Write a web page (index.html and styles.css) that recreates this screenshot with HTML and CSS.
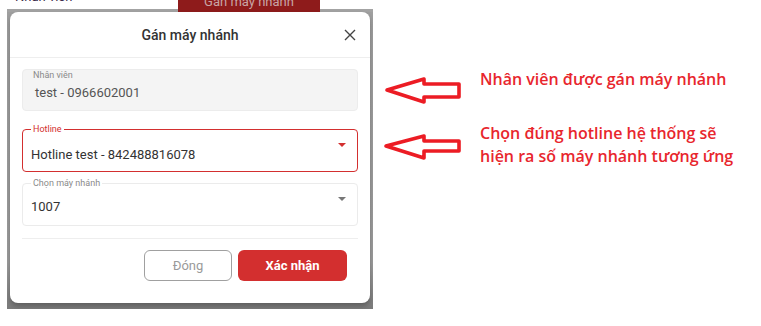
FILE: index.html
```html
<!DOCTYPE html>
<html lang="vi">
<head>
<meta charset="utf-8">
<title>Gán máy nhánh</title>
<link rel="stylesheet" href="styles.css">
</head>
<body>
<div class="stage">
  <div class="shot">
    <div class="pagebar">
      <span class="pagebar-text">Nhân viên</span>
      <span class="pagebar-btn">Gán máy nhánh</span>
    </div>
    <div class="modal">
      <div class="modal-head">
        <span class="modal-title">Gán máy nhánh</span>
        <svg class="close" width="12" height="12" viewBox="0 0 12 12"><path d="M1 1L11 11M11 1L1 11" stroke="#444" stroke-width="1.4" fill="none"/></svg>
      </div>
      <div class="modal-body">
        <div class="field field-disabled">
          <span class="label-in">Nhân viên</span>
          <span class="value value-muted">test - 0966602001</span>
        </div>
        <div class="field field-active">
          <span class="label-notch label-red">Hotline</span>
          <span class="value">Hotline test - 842488816078</span>
          <span class="caret caret-red"></span>
        </div>
        <div class="field field-normal">
          <span class="label-notch">Chọn máy nhánh</span>
          <span class="value">1007</span>
          <span class="caret"></span>
        </div>
        <div class="divider"></div>
        <div class="actions">
          <button class="btn btn-ghost">Đóng</button>
          <button class="btn btn-primary">Xác nhận</button>
        </div>
      </div>
    </div>
  </div>
  <div class="notes">
    <div class="note note-1">
      <svg class="arrow" width="80" height="28" viewBox="0 0 80 28"><polygon points="4,14 41,3 41,8 76,8 76,21 41,21 41,26" fill="#fff" stroke="#ec1c24" stroke-width="3.6" stroke-linejoin="round"/></svg>
      <div class="note-text">Nhân viên được gán máy nhánh</div>
    </div>
    <div class="note note-2">
      <svg class="arrow" width="80" height="28" viewBox="0 0 80 28"><polygon points="3,14 41,4 41,9 76,9 76,19 41,19 41,26" fill="#fff" stroke="#ec1c24" stroke-width="3.6" stroke-linejoin="round"/></svg>
      <div class="note-text">Chọn đúng hotline hệ thống sẽ<br>hiện ra số máy nhánh tương ứng</div>
    </div>
  </div>
</div>
</body>
</html>
```

FILE: styles.css
```css
* { box-sizing: border-box; }
html, body { margin: 0; padding: 0; background: #fff; }
body { font-family: Roboto, "Noto Sans", sans-serif; width: 761px; height: 326px; overflow: hidden; }

.stage { display: flex; align-items: flex-start; }

.shot {
  margin-left: 7px;
  width: 366px;
  height: 309px;
  background: linear-gradient(#9f9f9f 0, #9c9c9c 85%, #7a7a7a 100%);
  display: flex;
  flex-direction: column;
  overflow: hidden;
}

.pagebar {
  height: 12px;
  flex: none;
  display: flex;
  align-items: flex-start;
  background: linear-gradient(#fff 0, #fff 9px, #a3a3a3 9px);
  overflow: hidden;
}
.pagebar-text {
  margin: -10px 0 0 8px;
  width: 163px;
  font-size: 13px;
  line-height: 13px;
  color: #3b2c4a;
}
.pagebar-btn {
  width: 142px;
  height: 12px;
  background: #8e1b1b;
  color: #c9a5a5;
  font-size: 13px;
  line-height: 3px;
  text-align: center;
  overflow: hidden;
}

.modal {
  margin: 0 3px;
  height: 291px;
  background: #fff;
  border-radius: 8px;
  box-shadow: 0 3px 5px rgba(0,0,0,0.25);
  display: flex;
  flex-direction: column;
}

.modal-head {
  height: 46px;
  flex: none;
  display: flex;
  align-items: center;
  justify-content: center;
  position: relative;
  border-bottom: 1px solid #eeeeee;
}
.modal-title {
  font-size: 14px;
  font-weight: 500;
  color: #333;
}
.close {
  position: absolute;
  right: 14px;
  top: 17px;
}

.modal-body {
  padding: 11px 12px 0;
  display: flex;
  flex-direction: column;
}

.field {
  position: relative;
  height: 42px;
  border-radius: 4px;
  border: 1px solid #e6e6e6;
  display: flex;
  align-items: center;
  padding: 0 40px 0 8px;
}
.field-disabled {
  background: #f4f4f4;
  border-color: #ececec;
}
.field-active {
  margin-top: 18px;
  height: 43px;
  border-color: #d32f2f;
  padding-top: 7px;
}
.field-normal {
  margin-top: 11px;
  height: 43px;
  border-color: #ebebeb;
  padding-top: 3px;
}

.label-in {
  position: absolute;
  left: 10px;
  top: 0px;
  font-size: 9px;
  color: #8a8a8a;
}
.label-notch {
  position: absolute;
  left: 8px;
  top: -6px;
  padding: 0 2px;
  background: #fff;
  font-size: 9px;
  line-height: 11px;
  color: #8a8a8a;
}
.label-red { color: #d32f2f; }

.value {
  font-size: 13px;
  color: #333;
}
.value-muted {
  color: #555;
  padding: 4px 0 0 4px;
}

.caret {
  position: absolute;
  right: 11px;
  top: 13px;
  width: 0;
  height: 0;
  border-left: 4px solid transparent;
  border-right: 4px solid transparent;
  border-top: 4px solid #777;
}
.caret-red { border-top-color: #d32f2f; }

.divider {
  margin-top: 12px;
  height: 1px;
  background: #eeeeee;
}

.actions {
  margin-top: 11px;
  display: flex;
  justify-content: flex-end;
  gap: 6px;
  padding-right: 11px;
}
.btn {
  height: 31px;
  border-radius: 6px;
  font-family: Roboto, sans-serif;
  font-size: 13px;
  cursor: pointer;
}
.btn-ghost {
  width: 88px;
  background: #fff;
  border: 1px solid #a0a0a0;
  color: #9a9a9a;
}
.btn-primary {
  width: 109px;
  background: #d32f2f;
  border: none;
  color: #fff;
  font-weight: 700;
}

.notes {
  margin-left: 10px;
  padding-top: 68px;
  display: flex;
  flex-direction: column;
  gap: 18px;
}
.note {
  display: flex;
  align-items: flex-start;
  gap: 17px;
}
.note-1 .arrow { margin-top: 8px; }
.note-2 .arrow { margin-top: 10px; }
.note-text {
  font-family: "Open Sans", sans-serif;
  font-weight: 600;
  font-size: 16px;
  line-height: 23px;
  color: #e8262d;
  white-space: nowrap;
}
```
